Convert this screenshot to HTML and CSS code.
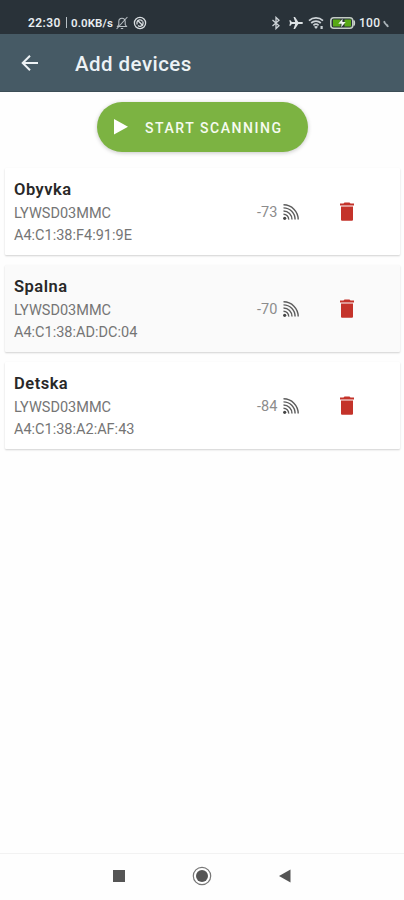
FILE: index.html
```html
<!DOCTYPE html>
<html lang="en">
<head>
<meta charset="utf-8">
<title>Add devices</title>
<link rel="stylesheet" href="styles.css">
</head>
<body>
<svg class="defs" width="0" height="0">
  <symbol id="signal" viewBox="0 0 18 18">
    <circle cx="2.7" cy="15.300" r="1.600" fill="#444"/>
    <path d="M1.500 11.200a5.200 5.200 0 0 1 5.200 5.400M1.500 8a8.500 8.500 0 0 1 8.500 8.600M1.500 4.900a11.600 11.600 0 0 1 11.600 11.700M1.500 1.800a14.700 14.700 0 0 1 14.700 14.800" fill="none" stroke="#5c5c5c" stroke-width="1.400"/>
  </symbol>
  <symbol id="trash" viewBox="0 0 16 20">
    <path d="M1 1.600h3.500L5.500.6h5l1 1H15v2H1zM2 4.600h12v13.200q0 1-1 1H3q-1 0-1-1z" fill="#c4332a"/>
  </symbol>
</svg>
<div class="status">
  <span class="clock">22:30</span><span class="divider"></span><span class="rate">0.0KB/s</span>
  <svg class="bell" viewBox="0 0 12 14"><path d="M1.500 10.500h9l-1.300-2V5.500a3.200 3.200 0 0 0-6.400 0v3zM4.800 12.500h2.400M.6 13 11.400 1" fill="none" stroke="#b8bfc4" stroke-width="1.050"/></svg>
  <svg class="sync" viewBox="0 0 14 14"><circle cx="7" cy="7" r="5.600" fill="none" stroke="#d9dee1" stroke-width="1.300"/><path d="M4 8.500V6.200a3 3 0 0 1 5.500-.8M10 5.500v2.300a3 3 0 0 1-5 1.700M4.500 4.200l5.500 5.600" fill="none" stroke="#d9dee1" stroke-width="1.300"/></svg>
  <span class="spacer"></span>
  <svg class="bt" viewBox="0 0 10 14"><path d="M1.500 4 8 9.800 5 12.600V1.400L8 4.200 1.500 10" fill="none" stroke="#cdd3d7" stroke-width="1.300"/></svg>
  <svg class="plane" viewBox="0 0 14 14"><path d="M14 7q0-1-1.200-1H9.300L6 1H4.500l1.700 5H2.800L1.500 4.300H.3L1 7l-.7 2.700h1.200L2.800 8h3.400l-1.700 5H6l3.300-5h3.500Q14 8 14 7z" fill="#dde2e5"/></svg>
  <svg class="wifi" viewBox="0 0 16 14"><path d="M1 4.600a10.500 10.500 0 0 1 14 0M3.200 7a7.200 7.200 0 0 1 9.600 0M5.400 9.300a4 4 0 0 1 5.200 0" fill="none" stroke="#cdd3d7" stroke-width="1.700"/><path d="m8 13-2-2.300q2-1.500 4 0zM12.500 10h2.200v3h-2.200z" fill="#c9d0d4"/></svg>
  <svg class="battery" viewBox="0 0 26 12"><rect x=".8" y=".8" width="22" height="10.400" rx="3" fill="#293238" stroke="#c3ccc4" stroke-width="1.600"/><path d="M24 3.500q1.500 2.500 0 5z" fill="#d2d9d4" stroke="#d2d9d4"/><path d="M3 2.500h7.500v7H3zM14.500 2.500h6.500v7h-6.500z" fill="#58a915"/><path d="m12.500 1.800-4.200 5h3.300l-.4 3.500 4.500-5.200h-3.300z" fill="#f0f5ee"/></svg>
  <span class="percent">100</span>
  <svg class="sign" viewBox="0 0 6 8"><path d="M1 2 4.800 6.500M1 1.200l1 2M4 4.500l1 2.500" stroke="#aab3b8" stroke-width="1.800"/></svg>
</div>
<header class="bar">
  <svg class="back" viewBox="0 0 18 18"><path d="M17 9H2M9 1.700 1.700 9 9 16.300" fill="none" stroke="#edf2f5" stroke-width="2"/></svg>
  <h1>Add devices</h1>
</header>
<main>
  <button class="scan"><svg viewBox="0 0 16 18"><path d="M1 1v15.500L15 8.750z" fill="#fff"/></svg><span>START SCANNING</span></button>
  <section class="card">
    <div class="info"><h2>Obyvka</h2><p>LYWSD03MMC</p><p>A4:C1:38:F4:91:9E</p></div>
    <span class="rssi">-73</span><svg class="signal"><use href="#signal"/></svg><svg class="trash"><use href="#trash"/></svg>
  </section>
  <section class="card alt">
    <div class="info"><h2>Spalna</h2><p>LYWSD03MMC</p><p>A4:C1:38:AD:DC:04</p></div>
    <span class="rssi">-70</span><svg class="signal"><use href="#signal"/></svg><svg class="trash"><use href="#trash"/></svg>
  </section>
  <section class="card">
    <div class="info"><h2>Detska</h2><p>LYWSD03MMC</p><p>A4:C1:38:A2:AF:43</p></div>
    <span class="rssi">-84</span><svg class="signal"><use href="#signal"/></svg><svg class="trash"><use href="#trash"/></svg>
  </section>
</main>
<nav class="keys">
  <svg viewBox="0 0 20 20"><path d="M4 4h12v12H4z" fill="#555"/></svg>
  <svg viewBox="0 0 20 20"><circle cx="10" cy="10" r="8.700" fill="#fff" stroke="#777" stroke-width="1.200"/><circle cx="10" cy="10" r="6" fill="#555"/></svg>
  <svg viewBox="0 0 20 20"><path d="M15.500 3.500v13L4 10z" fill="#555"/></svg>
</nav>
</body>
</html>
```
FILE: styles.css
```css
* { box-sizing: border-box; }
body {
  margin: 0;
  width: 404px;
  height: 900px;
  display: flex;
  flex-direction: column;
  overflow: hidden;
  background: #fefefe;
  font-family: Roboto, sans-serif;
}
svg { display: block; flex: none; }
h1, h2, p { margin: 0; white-space: nowrap; }
.defs { display: none; }
.status {
  height: 34px;
  flex: none;
  display: flex;
  align-items: center;
  padding: 11px 15px 0 28px;
  background: #293239;
  color: #e8edf0;
  font-weight: 600;
  line-height: 14px;
}
.clock { width: 34px; font-size: 12px; letter-spacing: 0.4px; }
.divider { width: 1px; height: 11px; margin: 0 4px 0 4px; background: #b8c0c5; }
.rate { width: 43px; font-size: 11.5px; letter-spacing: 0.1px; }
.bell { width: 12px; height: 14px; margin-left: 2px; }
.sync { width: 14px; height: 14px; margin-left: 5px; }
.spacer { flex: 1; }
.bt { width: 10px; height: 14px; }
.plane { width: 14px; height: 14px; margin-left: 8px; }
.wifi { width: 16px; height: 14px; margin-left: 5px; }
.battery { width: 26px; height: 12px; margin-left: 6px; }
.percent { width: 22px; margin-left: 3px; font-size: 12px; font-weight: 500; letter-spacing: 0.3px; }
.sign { width: 6px; height: 8px; margin: 2px 0 0 2px; }
.bar {
  height: 58px;
  flex: none;
  display: flex;
  align-items: center;
  padding: 0 21px 0;
  background: #465a65;
  border-bottom: 1px solid #3c4e57;
  color: #edf2f5;
}
.back { width: 18px; height: 18px; }
h1 { margin: 2px 0 0 36px; font-size: 20.5px; font-weight: 500; line-height: 26px; letter-spacing: 0.45px; }
main { flex: 1; display: flex; flex-direction: column; padding: 10px 4px 0 5px; gap: 10px; }
.scan {
  align-self: center;
  width: 211px;
  height: 50px;
  margin: 0 0 6px;
  padding: 0 0 0 16px;
  display: flex;
  align-items: center;
  border: 0;
  border-radius: 25px;
  background: #7cb342;
  color: #f6fbf0;
  box-shadow: 0 1px 4px rgba(0, 0, 0, 0.22);
  font: 500 14px/20px Roboto, sans-serif;
  letter-spacing: 1.55px;
  white-space: nowrap;
}
.scan svg { width: 16px; height: 18px; margin-right: 16px; }
.scan span { padding-top: 2px; }
.card {
  height: 87px;
  display: flex;
  align-items: center;
  padding-left: 9px;
  background: #fff;
  border-radius: 1px;
  box-shadow: 0 1px 2px rgba(0, 0, 0, 0.18);
}
.alt { background: #fafafa; }
.info { width: 243px; align-self: flex-start; padding-top: 11px; }
h2 { font-size: 16.5px; line-height: 22px; font-weight: 600; color: #282828; letter-spacing: 0.5px; }
p { font-size: 14.5px; line-height: 22px; color: #757575; }
h2 + p { margin-top: 2px; }
.rssi { width: 22px; padding-top: 2px; font-size: 14.5px; color: #8c8c8c; }
.signal { width: 18px; height: 18px; margin-left: 3px; }
.trash { width: 16px; height: 20px; margin-left: 39px; }
.keys {
  height: 47px;
  flex: none;
  display: flex;
  justify-content: center;
  gap: 63px;
  padding-top: 12px;
  border-top: 1px solid #f2f2f2;
  background: #fefefe;
}
.keys svg { width: 20px; height: 20px; }
```
